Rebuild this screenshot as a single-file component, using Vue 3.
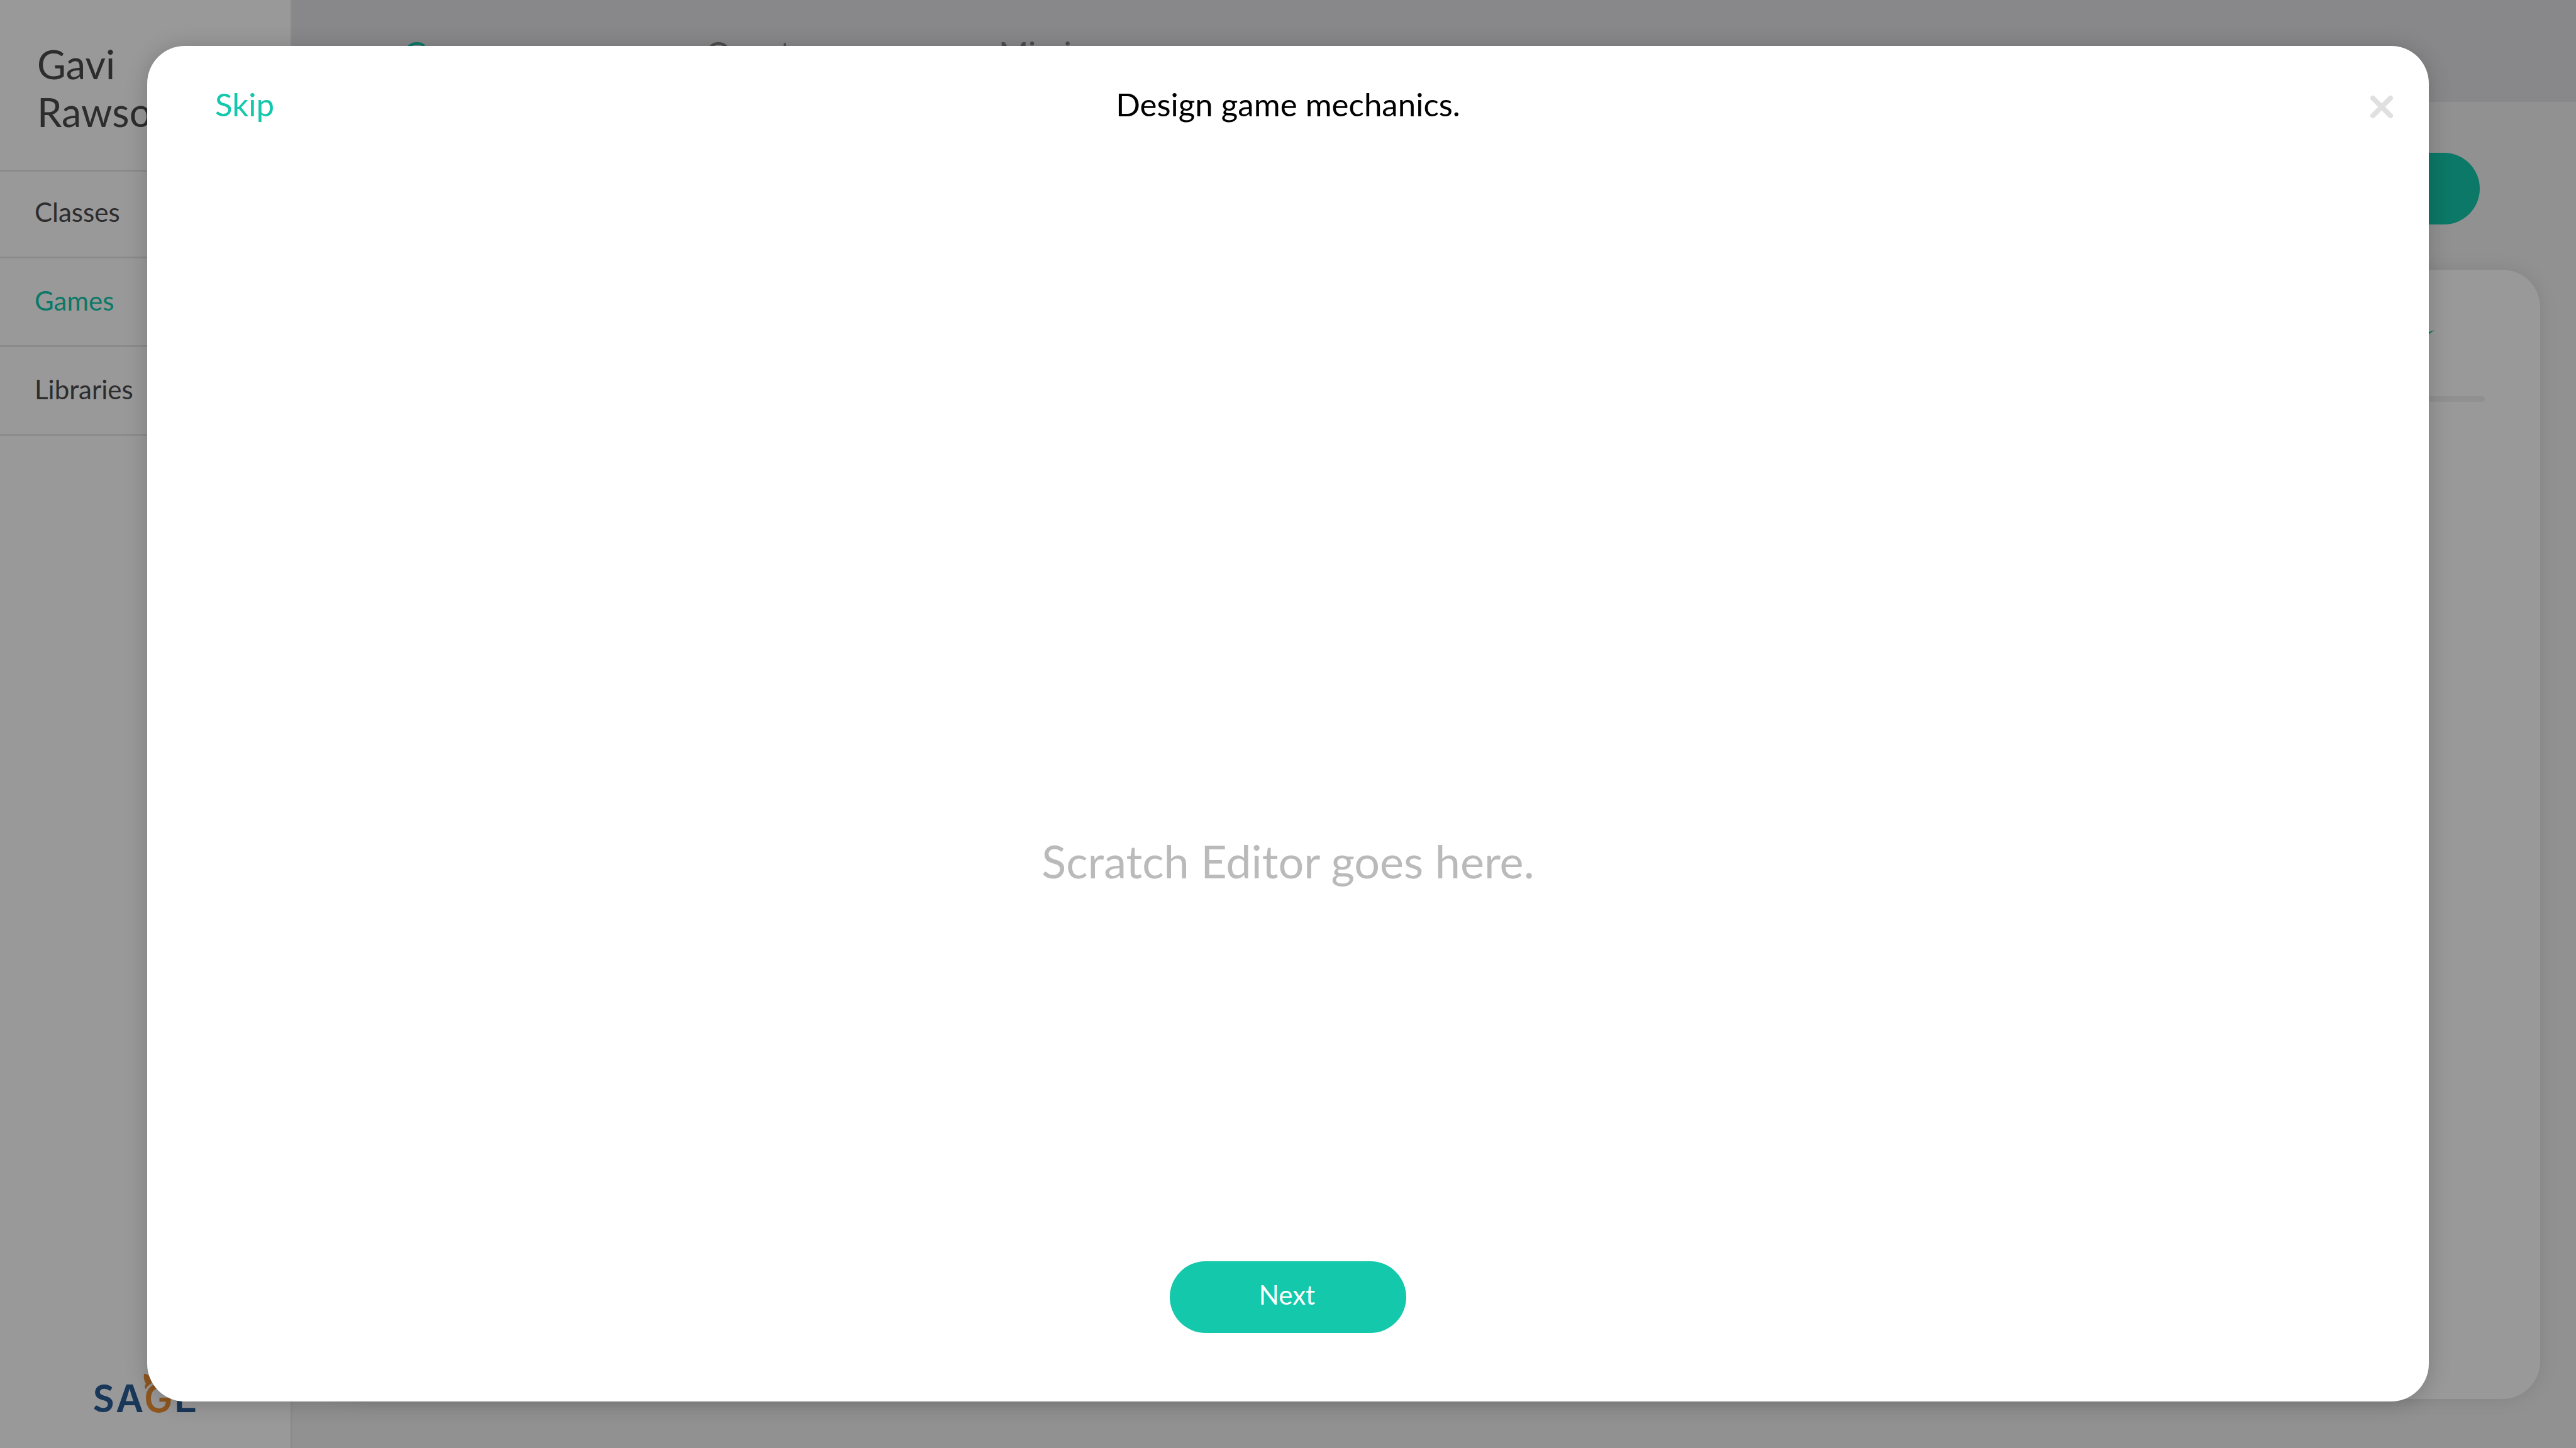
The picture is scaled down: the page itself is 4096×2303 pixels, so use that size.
<script setup>
const sections = [
  { label: 'Classes', active: false },
  { label: 'Games', active: true },
  { label: 'Libraries', active: false },
]
const tabs = [
  { label: 'Games', active: true },
  { label: 'Quests', active: false },
  { label: 'Missions', active: false },
]
</script>

<template>
  <div class="page">
    <aside class="sidebar">
      <div class="profile">Gavi<br />Rawson</div>
      <nav class="sections">
        <a
          v-for="item in sections"
          :key="item.label"
          href="#"
          class="section"
          :class="{ active: item.active }"
        >{{ item.label }}</a>
      </nav>
      <svg class="logo" viewBox="0 0 164 64" role="img" aria-label="SAGE">
        <text class="navy letter-s" x="-2" y="61">S</text>
        <text class="navy" x="34" y="61">A</text>
        <text class="orange" x="79" y="61">G</text>
        <text class="navy" x="127" y="61">E</text>
        <path
          class="orange"
          d="M79 0C83 0 87 2 88 5C91 9 92 12 91 15C88 17 84 20 82 24C79 23 80 18 82 16C79 11 78 5 79 0Z"
        />
      </svg>
    </aside>

    <main class="main">
      <header class="topbar">
        <a
          v-for="tab in tabs"
          :key="tab.label"
          href="#"
          class="tab"
          :class="{ active: tab.active }"
        >{{ tab.label }}</a>
      </header>
      <div class="toolbar">
        <button type="button" class="pill" aria-label="New game"></button>
      </div>
      <section class="card">
        <div class="card-row">
          <svg class="send" viewBox="0 0 48 48" aria-hidden="true">
            <path d="M48 0L0 16L10 28Z" />
          </svg>
        </div>
        <hr class="divider" />
      </section>
    </main>

    <div class="overlay">
      <div class="modal" role="dialog" aria-modal="true" aria-labelledby="modal-title">
        <div class="modal-head">
          <button type="button" class="skip">Skip</button>
          <h1 id="modal-title" class="title">Design game mechanics.</h1>
          <button type="button" class="close" aria-label="Close">
            <svg viewBox="0 0 36 36" aria-hidden="true">
              <path d="M4 4L32 32M32 4L4 32" />
            </svg>
          </button>
        </div>
        <div class="modal-body">
          <p class="placeholder">Scratch Editor goes here.</p>
        </div>
        <div class="modal-foot">
          <button type="button" class="pill">Next</button>
        </div>
      </div>
    </div>
  </div>
</template>

<style>
body {
  margin: 0;
}
</style>

<style scoped>
.page {
  position: relative;
  display: grid;
  grid-template-columns: 465px 1fr;
  min-height: 100vh;
  box-sizing: border-box;
  background: #f2f2f2;
  color: #4b4b4d;
  font-family: Lato, "Liberation Sans", sans-serif;
}

a {
  color: inherit;
  text-decoration: none;
}

button {
  border: 0;
  padding: 0;
  background: none;
  font-family: inherit;
  cursor: pointer;
}

.sidebar {
  display: flex;
  flex-direction: column;
  border-right: 3px solid #e8e8e8;
  background: #fff;
}

.profile {
  padding: 64px 59px 54px;
  border-bottom: 3px solid #e8e8e8;
  font-size: 63px;
  line-height: 76px;
}

.sections {
  display: flex;
  flex-direction: column;
  margin-top: -3px;
}

.section {
  padding: 41px 55px 45px;
  border-bottom: 3px solid #e8e8e8;
  font-size: 42px;
  line-height: 52px;
}

.section.active,
.tab.active {
  color: #14c8ac;
}

.logo {
  width: 164px;
  height: 64px;
  margin: auto 0 54px 150px;
  overflow: visible;
  font-family: Inter, "Liberation Sans", sans-serif;
  font-size: 61px;
  font-weight: 600;
}

.letter-s {
  font-family: Lato, "Liberation Sans", sans-serif;
  font-weight: 700;
}

.navy {
  fill: #2b5c94;
}

.orange {
  fill: #ee9134;
}

.main {
  display: flex;
  flex-direction: column;
}

.topbar {
  display: grid;
  grid-template-columns: 480px 466px 1fr;
  height: 162px;
  box-sizing: border-box;
  padding: 54px 177px 0;
  background: #e3e3e6;
}

.tab {
  color: #808080;
  font-size: 51px;
  line-height: 60px;
}

.toolbar {
  display: flex;
  justify-content: flex-end;
  padding: 81px 153px 72px;
}

.pill {
  width: 376px;
  height: 114px;
  padding: 0 3px 8px 0;
  border-radius: 57px;
  background: #14c8ac;
  color: #fff;
  font-size: 42px;
  line-height: 52px;
}

.card {
  flex: 1;
  margin: 0 57px 78px;
  padding: 96px 88px 0;
  border-radius: 60px;
  background: #fff;
  box-shadow: 0 0 30px rgba(0, 0, 0, 0.1);
}

.card-row {
  display: flex;
  justify-content: flex-end;
  padding: 0 80px 57px 0;
}

.send {
  width: 48px;
  height: 48px;
  fill: #14c8ac;
}

.divider {
  height: 9px;
  margin: 0;
  border: 0;
  border-radius: 5px;
  background: #f0f0f0;
}

.overlay {
  position: absolute;
  inset: 0;
  display: flex;
  padding: 73px 234px 74px;
  background: rgba(0, 0, 0, 0.4);
}

.modal {
  display: flex;
  flex: 1;
  flex-direction: column;
  padding: 63px 57px 109px;
  border-radius: 60px;
  background: #fff;
  box-shadow: 0 3px 36px rgba(0, 0, 0, 0.2);
}

.modal-head {
  display: grid;
  grid-template-columns: 1fr auto 1fr;
  align-items: end;
}

.skip {
  justify-self: start;
  padding-left: 51px;
  color: #14c8ac;
  font-size: 51px;
  line-height: 60px;
}

.title {
  margin: 0;
  color: #000;
  font-size: 51px;
  font-weight: 400;
  line-height: 60px;
}

.close {
  justify-self: end;
  padding-bottom: 8px;
}

.close svg {
  display: block;
  width: 36px;
  height: 36px;
  fill: none;
  stroke: #e0e0e0;
  stroke-width: 8px;
  stroke-linecap: round;
}

.modal-body {
  display: flex;
  flex: 1;
  align-items: center;
  justify-content: center;
  padding-top: 536px;
}

.placeholder {
  margin: 0;
  color: #bababa;
  font-size: 72px;
  line-height: 86px;
}

.modal-foot {
  display: flex;
  justify-content: center;
}
</style>
